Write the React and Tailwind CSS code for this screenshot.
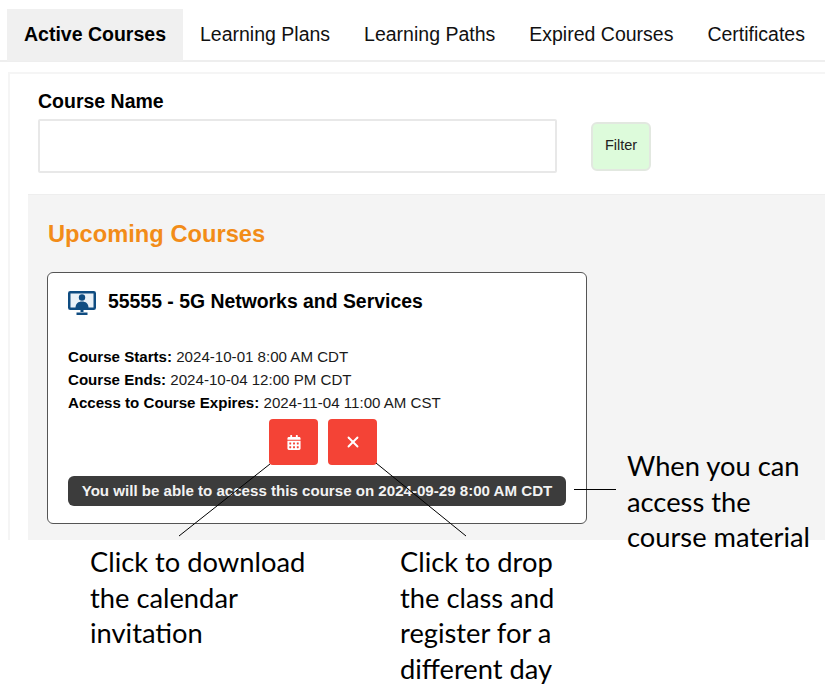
import React from 'react';
import { FaCalendarAlt } from 'react-icons/fa';
import { X } from 'lucide-react';

const TABS = ['Active Courses', 'Learning Plans', 'Learning Paths', 'Expired Courses', 'Certificates'];

const DATES = [
  { label: 'Course Starts:', value: '2024-10-01 8:00 AM CDT' },
  { label: 'Course Ends:', value: '2024-10-04 12:00 PM CDT' },
  { label: 'Access to Course Expires:', value: '2024-11-04 11:00 AM CST' },
];

const NOTES = [
  { className: 'left-[90px] top-[544px] w-[240px]', lines: ['Click to download', 'the calendar', 'invitation'] },
  { className: 'left-[400px] top-[544px] w-[200px]', lines: ['Click to drop', 'the class and', 'register for a', 'different day'] },
  { className: 'left-[627px] top-[448px] w-[198px]', lines: ['When you can', 'access the', 'course material'] },
];

const MonitorIcon = () => (
  <svg viewBox="0 0 28 24" className="w-[28px] h-[24px] shrink-0">
    <rect x="1.250" y="1.250" width="25.500" height="16.500" rx="1" fill="#eaf1f7" stroke="#0f4c81" strokeWidth="2.500" />
    <circle cx="14" cy="6.500" r="3.200" fill="#0f4c81" />
    <path d="M7.500 17c0-4.500 2.800-6.500 6.500-6.500s6.500 2 6.500 6.500z" fill="#0f4c81" />
    <path d="M12.500 18h3v3h-3zM8.500 21.500h11V24h-11z" fill="#0f4c81" />
  </svg>
);

const App = () => {
  return (
    <div className="relative w-[825px] h-[695px] overflow-hidden bg-white text-black font-['Liberation_Sans',Arial,sans-serif]">
      <div className="pt-[9px] pl-[7px] h-[62px] border-b-2 border-[#eeeeee] flex">
        {TABS.map((tab, i) => (
          <div
            key={tab}
            className={`h-[52px] px-[17px] flex items-center text-[19.500px] whitespace-nowrap ${
              i === 0 ? 'bg-[#f0f0f0] font-bold' : 'text-[#111111]'
            }`}
          >
            {tab}
          </div>
        ))}
      </div>

      <div className="mt-[10px] ml-[8px] h-[468px] border-l-2 border-t-2 border-[#f5f5f5] pl-[28px] flex flex-col">
        <label className="mt-[15px] text-[19.500px] font-bold leading-[24px]">Course Name</label>
        <div className="mt-[6px] flex items-center">
          <input className="w-[519px] h-[54px] bg-white border-2 border-[#e8e8e8] rounded-[2px]" />
          <button className="ml-[34px] w-[60px] h-[49px] bg-[#ddfbdb] border-2 border-[#e2e8e0] rounded-[6px] text-[14.500px] text-[#222222]">
            Filter
          </button>
        </div>

        <div className="mt-[21px] -ml-[10px] flex-1 bg-[#f4f4f4] border-t border-[#eeeeee] pl-[19px] pt-[24px]">
          <h2 className="pl-[1px] text-[23.700px] font-bold leading-[30px] text-[#f28c18]">Upcoming Courses</h2>

          <div className="mt-[23px] w-[540px] h-[252px] bg-white border border-[#555555] rounded-[6px] px-[20px] pt-[18px]">
            <div className="flex items-center gap-[12px]">
              <MonitorIcon />
              <h3 className="text-[19.400px] font-bold leading-[26px] -mt-[4px] whitespace-nowrap">55555 - 5G Networks and Services</h3>
            </div>

            <div className="mt-[30px] text-[15.100px] leading-[23px] text-[#1a1a1a]">
              {DATES.map((d) => (
                <p key={d.label}>
                  <b className="text-black">{d.label}</b> {d.value}
                </p>
              ))}
            </div>

            <div className="mt-[5px] flex justify-center gap-[10px] pl-[12px]">
              <button className="w-[49px] h-[46px] bg-[#f44336] rounded-[4px] flex items-center justify-center text-white">
                <FaCalendarAlt className="w-[14px] h-[15px]" />
              </button>
              <button className="w-[49px] h-[46px] bg-[#f44336] rounded-[4px] flex items-center justify-center text-white">
                <X size={18} strokeWidth={2.500} />
              </button>
            </div>

            <div className="mt-[11px] h-[30px] bg-[#3c3c3c] rounded-[6px] flex items-center justify-center text-[15.100px] font-bold text-[#f2f2f2] whitespace-nowrap">
              You will be able to access this course on 2024-09-29 8:00 AM CDT
            </div>
          </div>
        </div>
      </div>

      {/* callout lines drawn over the page */}
      <svg className="absolute left-0 top-0 pointer-events-none" width="825" height="695">
        <path d="M270 464L179 536M376 463L466 536M574 489.500H616" fill="none" stroke="#000000" strokeWidth="1" />
      </svg>

      {NOTES.map((note) => (
        <div key={note.lines[0]} className={`absolute ${note.className} font-['Lato',sans-serif] text-[27.300px] leading-[35.500px] text-black`}>
          {note.lines.map((line) => (
            <div key={line} className="whitespace-nowrap">{line}</div>
          ))}
        </div>
      ))}
    </div>
  );
};

export default App;
